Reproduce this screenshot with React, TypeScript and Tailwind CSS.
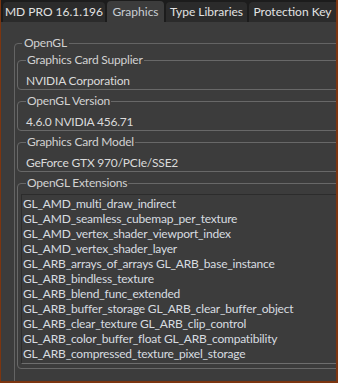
import React from "react";

const exts = [
  "GL_AMD_multi_draw_indirect",
  "GL_AMD_seamless_cubemap_per_texture",
  "GL_AMD_vertex_shader_viewport_index",
  "GL_AMD_vertex_shader_layer",
  "GL_ARB_arrays_of_arrays GL_ARB_base_instance",
  "GL_ARB_bindless_texture",
  "GL_ARB_blend_func_extended",
  "GL_ARB_buffer_storage GL_ARB_clear_buffer_object",
  "GL_ARB_clear_texture GL_ARB_clip_control",
  "GL_ARB_color_buffer_float GL_ARB_compatibility",
  "GL_ARB_compressed_texture_pixel_storage",
  "GL_ARB_compute_shader GL_ARB_compute_variable_group_size",
];

function Box({ title, value }: { title: string; value: string }) {
  return (
    <fieldset className="border border-[#686868] rounded-[4px] ml-[2px] mr-[1px] pl-[8px] pt-[6px] pb-[1px]">
      <legend className="ml-[0px] px-[1px] leading-[14px] text-[#d2d2d2]">{title}</legend>
      <div className="leading-[15px] text-[#dadada] whitespace-nowrap">{value}</div>
    </fieldset>
  );
}

export default function App() {
  return (
    <div
      className="w-[338px] h-[383px] bg-[#7c3510] pl-px pr-[2px] pb-[2px] flex flex-col overflow-hidden text-[12px] tracking-[-0.2px]"
      style={{ fontFamily: 'Lato, "Noto Sans", sans-serif' }}
    >
      <div className="h-[22px] bg-[#1c1c1c] flex items-end pl-[2px] gap-[2px] shrink-0 whitespace-nowrap tracking-normal">
        <div className="w-[102px] h-[20px] bg-[#2b2b2b] rounded-t-[4px] flex items-center justify-center text-[#e2e2e2]">MD PRO 16.1.196</div>
        <div className="w-[57px] h-[21px] bg-[#3c3c3c] rounded-t-[4px] flex items-center justify-center text-[#c9ced4]">Graphics</div>
        <div className="w-[81px] h-[20px] bg-[#2b2b2b] rounded-t-[4px] flex items-center justify-center text-[#e2e2e2]">Type Libraries</div>
        <div className="flex-1 h-[20px] bg-[#2b2b2b] rounded-tl-[4px] flex items-center justify-center text-[#e2e2e2]">Protection Key</div>
      </div>
      <div className="flex-1 bg-[#3c3c3c] overflow-hidden pt-[14px] pl-[13px] pr-[32px]">
        <fieldset className="border border-[#646464] rounded-[4px] pt-[3px] flex flex-col gap-[4px] h-[400px]">
          <legend className="ml-[7px] px-[2px] leading-[14px] text-[#d2d2d2]">OpenGL</legend>
          <Box title="Graphics Card Supplier" value="NVIDIA Corporation" />
          <Box title="OpenGL Version" value="4.6.0 NVIDIA 456.71" />
          <Box title="Graphics Card Model" value="GeForce GTX 970/PCIe/SSE2" />
          <fieldset className="border border-[#686868] rounded-[4px] ml-[2px] mr-[1px] pl-[3px] pr-[4px] pt-[4px] pb-[4px]">
            <legend className="ml-[5px] px-[1px] leading-[14px] text-[#d2d2d2]">OpenGL Extensions</legend>
            <div className="h-[170px] border border-t-[#2c2c2c] border-l-[#2c2c2c] border-r-[#6e6e6e] border-b-[#6e6e6e] bg-[#3c3c3c] overflow-hidden pl-[1px] pt-[1px]">
              {exts.map((e) => (
                <div key={e} className="leading-[15px] whitespace-nowrap text-[#d8dce0]">{e}</div>
              ))}
            </div>
          </fieldset>
        </fieldset>
      </div>
    </div>
  );
}
